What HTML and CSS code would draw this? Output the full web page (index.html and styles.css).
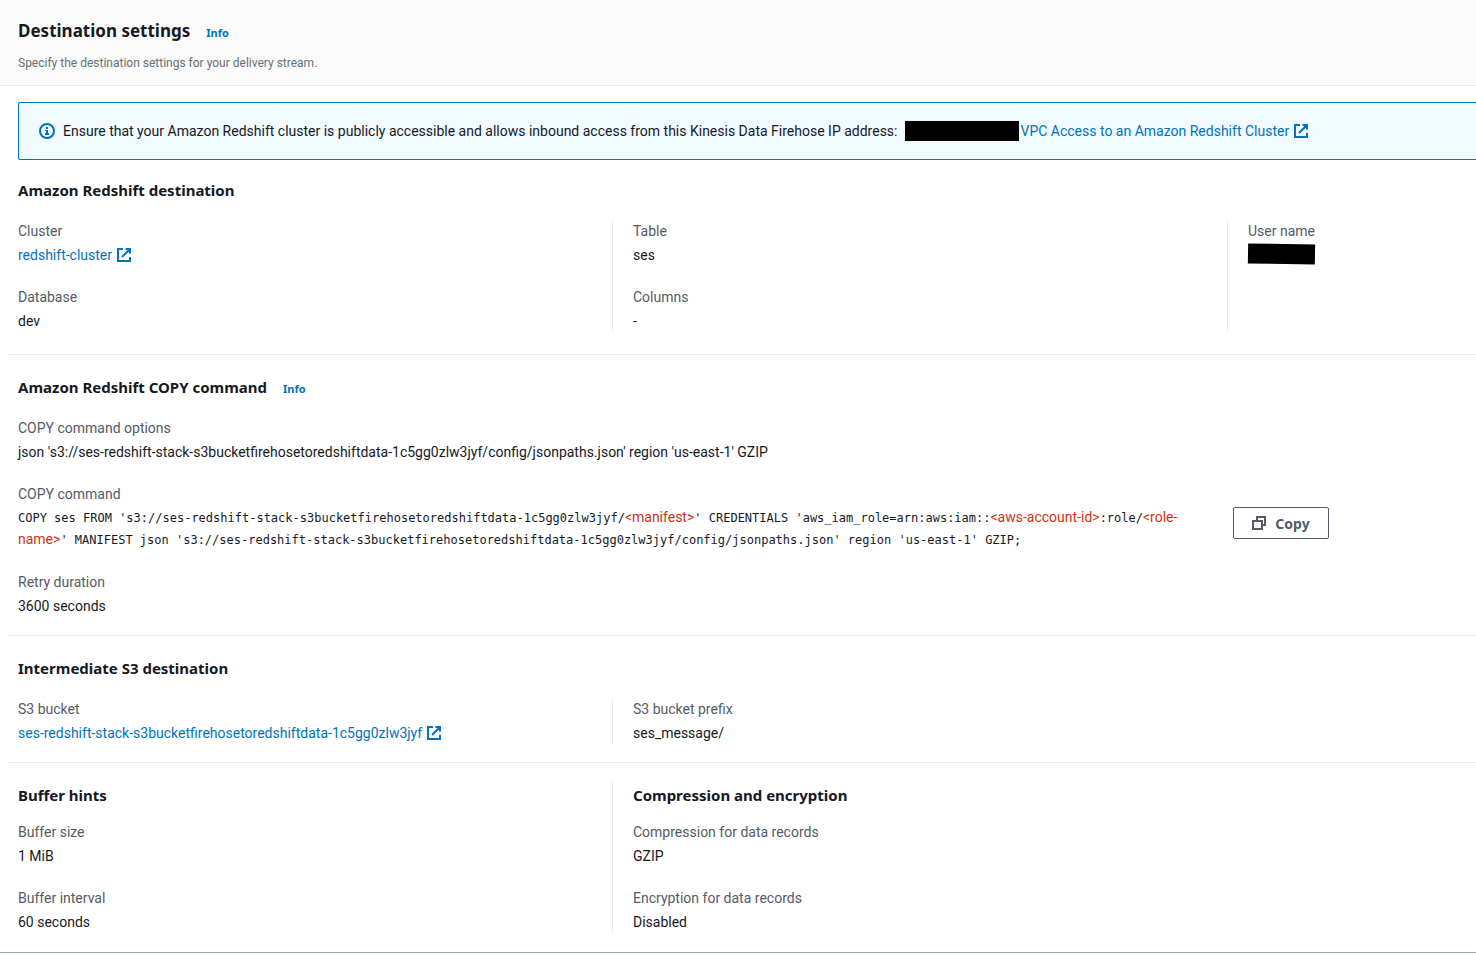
FILE: index.html
```html
<!DOCTYPE html>
<html lang="en">
<head>
    <meta charset="UTF-8">
    <meta name="viewport" content="width=device-width, initial-scale=1.0">
    <title>Destination settings</title>
    <link rel="stylesheet" href="styles.css">
</head>
<body>
    <!-- shared icons -->
    <svg class="sprite" aria-hidden="true">
        <symbol id="icon-external" viewBox="0 0 14 14">
            <path d="M6 1H1v12h12V9M8.5 1H13v4.5M13 1L5 9" fill="none" stroke="currentColor" stroke-width="2"/>
        </symbol>
    </svg>

    <header class="header">
        <div class="title-row">
            <h1>Destination settings</h1>
            <a href="#" class="info">Info</a>
        </div>
        <p class="description">Specify the destination settings for your delivery stream.</p>
    </header>

    <main>
        <div class="alert">
            <svg class="alert-icon" viewBox="0 0 16 16" aria-hidden="true">
                <circle cx="8" cy="8" r="7" fill="none" stroke="currentColor" stroke-width="2"/>
                <path d="M7 4h2v2H7zM6 7h3v3h1v2H6v-2h1V8H6z" fill="currentColor"/>
            </svg>
            <span>Ensure that your Amazon Redshift cluster is publicly accessible and allows inbound access from this Kinesis Data Firehose IP address:</span>
            <span class="redacted redacted-ip"></span>
            <a href="#">VPC Access to an Amazon Redshift Cluster <svg class="external"><use href="#icon-external"/></svg></a>
        </div>

        <section class="section section-cluster">
            <h2>Amazon Redshift destination</h2>
            <div class="columns">
                <dl class="column">
                    <dt>Cluster</dt>
                    <dd><a href="#">redshift-cluster <svg class="external"><use href="#icon-external"/></svg></a></dd>
                    <dt>Database</dt>
                    <dd>dev</dd>
                </dl>
                <dl class="column">
                    <dt>Table</dt>
                    <dd>ses</dd>
                    <dt>Columns</dt>
                    <dd>-</dd>
                </dl>
                <dl class="column">
                    <dt>User name</dt>
                    <dd><span class="redacted redacted-user"></span></dd>
                </dl>
            </div>
        </section>

        <section class="section">
            <div class="title-row">
                <h2>Amazon Redshift COPY command</h2>
                <a href="#" class="info">Info</a>
            </div>
            <dl class="column">
                <dt>COPY command options</dt>
                <dd>json 's3://ses-redshift-stack-s3bucketfirehosetoredshiftdata-1c5gg0zlw3jyf/config/jsonpaths.json' region 'us-east-1' GZIP</dd>
            </dl>
            <div class="copy-row">
                <dl class="column">
                    <dt>COPY command</dt>
                    <dd class="command">COPY ses FROM 's3://ses-redshift-stack-s3bucketfirehosetoredshiftdata-1c5gg0zlw3jyf/<span class="placeholder">&lt;manifest&gt;</span>' CREDENTIALS 'aws_iam_role=arn:aws:iam::<span class="placeholder">&lt;aws-account-id&gt;</span>:role/<span class="placeholder">&lt;role-name&gt;</span>' MANIFEST json 's3://ses-redshift-stack-s3bucketfirehosetoredshiftdata-1c5gg0zlw3jyf/config/jsonpaths.json' region 'us-east-1' GZIP;</dd>
                </dl>
                <button type="button" class="copy-btn">
                    <svg viewBox="0 0 14 14" aria-hidden="true">
                        <path d="M1 5h9v8H1zM5 5V1h8v8h-3" fill="none" stroke="currentColor" stroke-width="2"/>
                    </svg>
                    Copy
                </button>
            </div>
            <dl class="column">
                <dt>Retry duration</dt>
                <dd>3600 seconds</dd>
            </dl>
        </section>

        <section class="section">
            <h2>Intermediate S3 destination</h2>
            <div class="columns">
                <dl class="column">
                    <dt>S3 bucket</dt>
                    <dd><a href="#">ses-redshift-stack-s3bucketfirehosetoredshiftdata-1c5gg0zlw3jyf <svg class="external"><use href="#icon-external"/></svg></a></dd>
                </dl>
                <dl class="column">
                    <dt>S3 bucket prefix</dt>
                    <dd>ses_message/</dd>
                </dl>
            </div>
        </section>

        <section class="section section-hints">
            <div class="columns">
                <div class="column">
                    <h2>Buffer hints</h2>
                    <dl>
                        <dt>Buffer size</dt>
                        <dd>1 MiB</dd>
                        <dt>Buffer interval</dt>
                        <dd>60 seconds</dd>
                    </dl>
                </div>
                <div class="column">
                    <h2>Compression and encryption</h2>
                    <dl>
                        <dt>Compression for data records</dt>
                        <dd>GZIP</dd>
                        <dt>Encryption for data records</dt>
                        <dd>Disabled</dd>
                    </dl>
                </div>
            </div>
        </section>
    </main>
</body>
</html>
```
FILE: styles.css
```css
body {
    font-family: Roboto, sans-serif;
    font-size: 14px;
    line-height: 22px;
    color: #16191f;
    background-color: #fff;
    margin: 0;
}

h1, h2, p, dl, dd {
    margin: 0;
}

h1, h2, .info, .copy-btn {
    font-family: "Noto Sans", sans-serif;
    font-weight: bold;
}

h1 {
    font-size: 17px;
}

h2 {
    font-size: 15px;
    margin-bottom: 19px;
    padding-left: 18px;
}

a {
    color: #0073bb;
    text-decoration: none;
}

a:hover {
    text-decoration: underline;
}

dt {
    color: #545b64;
    margin-bottom: 2px;
}

dd + dt {
    margin-top: 20px;
}

.sprite {
    display: none;
}

.header {
    background-color: #fafafa;
    border-bottom: 1px solid #eaeded;
    padding: 20px 18px 11px;
}

.title-row {
    display: flex;
    align-items: baseline;
    gap: 16px;
}

.info {
    font-size: 11px;
    line-height: 16px;
}

.description {
    font-size: 12px;
    color: #687078;
    margin-top: 10px;
}

.alert {
    display: flex;
    align-items: center;
    background-color: #f1faff;
    border: 1px solid #0073bb;
    border-right: 0;
    border-radius: 2px 0 0 2px;
    margin: 16px 0 0 18px;
    padding: 17px 20px;
    white-space: nowrap;
}

.alert-icon {
    flex: none;
    width: 16px;
    height: 16px;
    margin-right: 8px;
    color: #0073bb;
}

.external {
    width: 14px;
    height: 14px;
    margin-left: 1px;
    vertical-align: -2px;
}

.redacted {
    display: inline-block;
    background-color: #000;
    height: 20px;
}

.redacted-ip {
    width: 114px;
    margin: 0 2px 0 7px;
}

.redacted-user {
    width: 67px;
    vertical-align: top;
    transform: rotate(1deg);
}

.section {
    margin-left: 8px;
    padding: 21px 0 18px;
    border-bottom: 1px solid #eaeded;
}

/* content lines up with the page edge, the rule starts at 8px */
.section > * {
    margin-left: -8px;
}

.section-cluster {
    padding: 19px 0 22px;
}

.columns {
    display: grid;
    grid-template-columns: 5fr 5fr 2fr;
}

.column {
    padding-left: 18px;
}

.columns .column:not(:last-child) {
    border-right: 1px solid #eaeded;
    margin-right: 2px;
}

.copy-row {
    display: grid;
    grid-template-columns: 10fr 2fr;
    align-items: end;
    margin-top: 20px;
    margin-bottom: 20px;
}

.copy-row .column {
    padding-right: 24px;
}

.command {
    font-family: "DejaVu Sans Mono", monospace;
    font-size: 12px;
}

.placeholder {
    font-family: Roboto, sans-serif;
    font-size: 14px;
    line-height: 18px;
    color: #d13212;
}

.copy-btn {
    display: flex;
    align-items: center;
    justify-content: center;
    gap: 9px;
    width: 96px;
    height: 32px;
    margin: 0 0 12px 3px;
    font-size: 14px;
    color: #545b64;
    background-color: #fff;
    border: 1px solid #545b64;
    border-radius: 2px;
    cursor: pointer;
}

.copy-btn:hover {
    background-color: #fafafa;
}

.copy-btn svg {
    width: 14px;
    height: 14px;
}

.section-hints {
    margin-left: 0;
    padding: 18px 0 19px;
    border-bottom: 1px solid #95a5a6;
    box-shadow: 0 1px #eaeded;
}

.section-hints > * {
    margin-left: 0;
}

.section-hints h2 {
    padding: 3px 0 0;
    margin-bottom: 15px;
}
```
